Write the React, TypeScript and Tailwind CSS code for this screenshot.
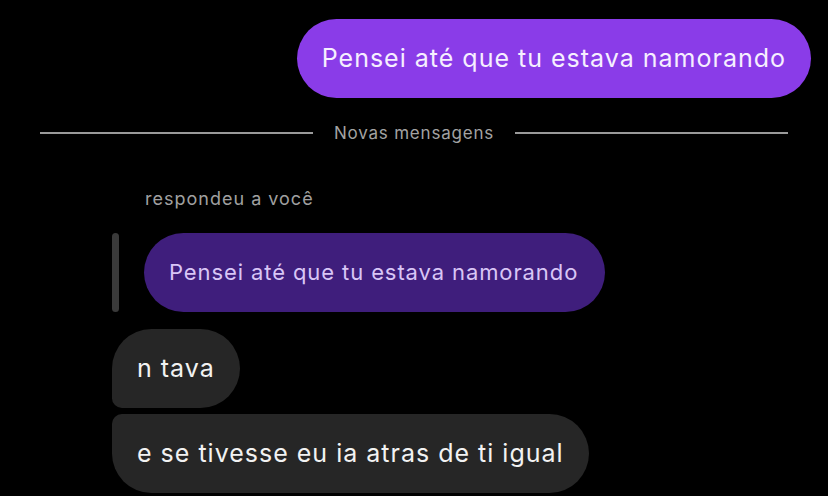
import React from 'react';

const font = { fontFamily: 'Inter, "Noto Sans", sans-serif' };

const App: React.FC = () => {
  return (
    <div className="w-[828px] h-[496px] overflow-hidden bg-black text-white" style={font}>
      <div className="flex justify-end pt-[19px] pr-[17px]">
        <div className="h-[79px] px-[25px] flex items-center rounded-[40px] bg-[#8a3ce8] text-[25px] tracking-[1px] text-[#f6efff]">
          Pensei até que tu estava namorando
        </div>
      </div>

      <div className="flex items-center h-[26px] mt-[22px] pl-[40px] pr-[40px]">
        <div className="flex-1 h-[2px] bg-[#9a9a9a]" />
        <span className="px-[21px] text-[17px] leading-[26px] text-[#a3a3a3] tracking-[0.8px]">Novas mensagens</span>
        <div className="flex-1 h-[2px] bg-[#9a9a9a]" />
      </div>

      <div className="pl-[145px] mt-[41px] text-[18px] leading-[24px] tracking-[1px] text-[#a0a0a0]">respondeu a você</div>

      <div className="flex items-stretch gap-[25px] pl-[112px] mt-[22px]">
        <div className="w-[7px] rounded-full bg-[#3a3a3a]" />
        <div className="h-[79px] pl-[25px] pr-[27px] flex items-center rounded-[40px] bg-[#3f1e7c] text-[22px] tracking-[0.9px] text-[#d9c6f6]">
          Pensei até que tu estava namorando
        </div>
      </div>

      <div className="flex flex-col items-start gap-[6px] pl-[112px] mt-[17px]">
        <div className="h-[79px] px-[25px] flex items-center rounded-[40px] rounded-bl-[10px] bg-[#262626] text-[25px] tracking-[1px] text-[#f2f2f2]">
          n tava
        </div>
        <div className="h-[79px] px-[25px] flex items-center rounded-[40px] rounded-tl-[10px] bg-[#262626] text-[25px] tracking-[1px] text-[#f2f2f2]">
          e se tivesse eu ia atras de ti igual
        </div>
      </div>
    </div>
  );
};

export default App;
